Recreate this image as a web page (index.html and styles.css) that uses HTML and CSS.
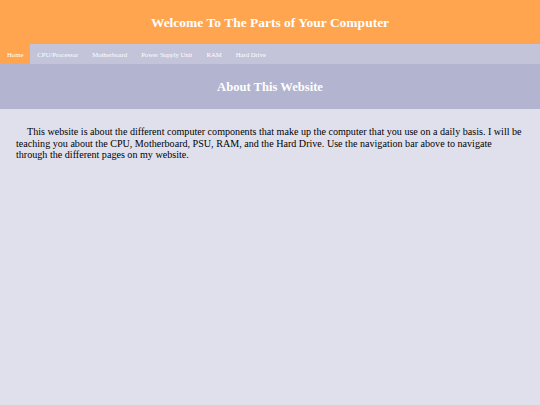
FILE: index.html
```html
<!DOCTYPE html>
<html>
<head>
<meta charset="utf-8">
<link rel="stylesheet" href="styles.css">
</head>
<body>
<header class="banner">
  <h1 class="title">Welcome To The Parts of Your Computer</h1>
</header>
<nav class="nav">
  <a class="nav-item active" href="#">Home</a>
  <a class="nav-item" href="#">CPU/Processor</a>
  <a class="nav-item" href="#">Motherboard</a>
  <a class="nav-item" href="#">Power Supply Unit</a>
  <a class="nav-item" href="#">RAM</a>
  <a class="nav-item" href="#">Hard Drive</a>
</nav>
<section class="section-head">
  <h2 class="section-title">About This Website</h2>
</section>
<main class="content">
  <p class="intro">This website is about the different computer components that make up the computer that you use on a daily basis. I will be teaching you about the CPU, Motherboard, PSU, RAM, and the Hard Drive. Use the navigation bar above to navigate through the different pages on my website.</p>
</main>
</body>
</html>
```
FILE: styles.css
```css
html, body {
  margin: 0;
  padding: 0;
}
body {
  background: #e0e0ed;
  font-family: "Liberation Serif", "Times New Roman", serif;
  width: 540px;
  height: 405px;
}
.banner {
  background: #ffa54f;
  height: 44px;
  display: flex;
  align-items: center;
  justify-content: center;
}
.title {
  margin: 1px 0 0;
  color: #ffffff;
  font-size: 13.5px;
  font-weight: bold;
}
.nav {
  background: #c3c3d9;
  height: 20px;
  display: flex;
}
.nav-item {
  color: #ffffff;
  text-decoration: none;
  font-size: 6.7px;
  padding: 0 7px;
  display: flex;
  align-items: center;
}
.nav-item.active {
  background: #ffa54f;
}
.section-head {
  background: #b2b4d0;
  height: 45px;
  display: flex;
  align-items: center;
  justify-content: center;
}
.section-title {
  margin: 1px 0 0;
  color: #ffffff;
  font-size: 12.6px;
  font-weight: bold;
}
.content {
  padding: 17px 17px 17px 16px;
}
.intro {
  margin: 0;
  font-size: 10.1px;
  line-height: 11.5px;
  text-indent: 11px;
  color: #000000;
}
```
